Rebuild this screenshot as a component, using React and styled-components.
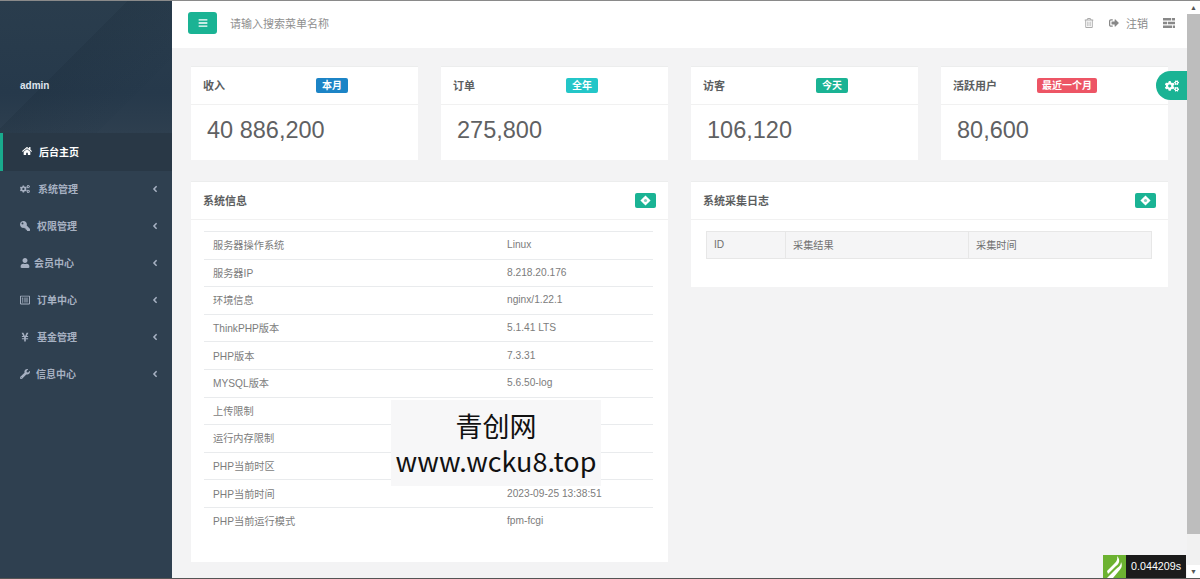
import React from 'react'
import styled, { createGlobalStyle } from 'styled-components'
import { FaHome, FaCogs, FaKey, FaUser, FaRegListAlt, FaYenSign, FaWrench, FaBars, FaRegTrashAlt, FaSignOutAlt, FaAngleLeft } from 'react-icons/fa'

const Global = createGlobalStyle`
  html, body { margin: 0; padding: 0; height: 100%; overflow: hidden; }
  body { font-family: "Liberation Sans", "Noto Sans CJK SC", sans-serif; color: #676a6c; }
`

const Frame = styled.div`
  position: relative;
  display: flex;
  height: 579px;
  box-sizing: border-box;
  border-top: 1px solid #8a8a8a;
  border-bottom: 1px solid #555;
  overflow: hidden;
  background: #f3f3f4;
`

const Sidebar = styled.aside`
  width: 172px;
  flex: none;
  background: #2f4050;
`

const Profile = styled.div`
  height: 132px;
  box-sizing: border-box;
  padding: 77px 0 0 20px;
  background:
    linear-gradient(135deg, transparent 42%, rgba(22, 38, 52, 0.18) 42%, rgba(30, 50, 68, 0.08) 75%, transparent 75%),
    linear-gradient(180deg, #2a3d4d 0%, #26394b 70%, #2e3f4f 100%);
  color: #dfe4ed;
  font-size: 10px;
  font-weight: 700;
  line-height: 16px;
`

const Menu = styled.nav`
  display: flex;
  flex-direction: column;
`

const MenuItem = styled.a`
  display: flex;
  align-items: center;
  height: ${p => (p.$active ? 38 : 37)}px;
  box-sizing: border-box;
  padding: 0 12px 2px ${p => (p.$active ? 19 : 20)}px;
  font-size: 10px;
  font-weight: 600;
  color: ${p => (p.$active ? '#fff' : '#a7b1c2')};
  background: ${p => (p.$active ? '#293846' : 'transparent')};
  border-left: ${p => (p.$active ? '3px solid #19aa8d' : '0')};
`

const MenuIcon = styled.span`
  display: flex;
  align-items: center;
  width: ${p => p.$w || 18}px;
  flex: none;
  font-size: 10px;
  svg { transform: ${p => (p.$flip ? 'scaleX(-1)' : 'none')}; }
`

const MenuText = styled.span`
  flex: 1;
`

const Main = styled.main`
  flex: 1;
  min-width: 0;
  display: flex;
  flex-direction: column;
`

const TopBar = styled.header`
  display: flex;
  align-items: center;
  height: 47px;
  flex: none;
  box-sizing: border-box;
  padding: 0 12px 3px 16px;
  background: #fff;
`

const MenuButton = styled.button`
  display: flex;
  align-items: center;
  justify-content: center;
  width: 29px;
  height: 22px;
  padding: 0;
  border: 0;
  border-radius: 3px;
  background: #1ab394;
  color: #fff;
  font-size: 10px;
`

const Search = styled.span`
  margin-left: 13px;
  flex: 1;
  font-size: 11px;
  color: #8f8f8f;
`

const BarAction = styled.span`
  display: flex;
  align-items: center;
  gap: 7px;
  margin-left: ${p => p.$gap || 0}px;
  font-size: 11px;
  color: #888;
  svg { font-size: 10px; color: ${p => p.$tone || '#888'}; }
`

const Content = styled.div`
  flex: 1;
  display: flex;
  flex-direction: column;
  gap: 21px;
  padding: 18px 19px 0;
`

const StatRow = styled.section`
  display: grid;
  grid-template-columns: repeat(4, 227px);
  column-gap: 23px;
`

const Card = styled.div`
  background: #fff;
  border-top: 1px solid #eceded;
`

const CardHead = styled.div`
  display: flex;
  align-items: center;
  height: 37px;
  box-sizing: content-box;
  padding: 0 12px;
  border-bottom: 1px solid #f1f1f1;
`

const CardTitle = styled.h5`
  margin: 0 0 1px;
  width: ${p => (p.$stat ? '113px' : 'auto')};
  flex: ${p => (p.$stat ? 'none' : 1)};
  font-size: 11px;
  font-weight: 600;
  color: #5c5e60;
`

const Label = styled.span`
  height: 15px;
  margin: 0 0 1px ${p => (p.$long ? -29 : 0)}px;
  padding: 0 ${p => (p.$long ? 5 : 6)}px;
  border-radius: 2px;
  background: ${p => p.$bg};
  color: #fff;
  font-size: 10px;
  font-weight: 700;
  line-height: 15px;
`

const StatValue = styled.div`
  height: 55px;
  padding-left: 16px;
  font-size: 23.5px;
  line-height: 51px;
  color: #5f6163;
`

const PanelRow = styled.section`
  display: grid;
  grid-template-columns: 477px 477px;
  column-gap: 23px;
  align-items: start;
`

const PanelBtn = styled.span`
  display: flex;
  align-items: center;
  justify-content: center;
  width: 21px;
  height: 15px;
  border-radius: 2px;
  background: #1ab394;
`

const PanelBody = styled.div`
  padding: ${p => p.$pad};
`

const InfoTable = styled.table`
  width: 100%;
  border-collapse: collapse;
  font-size: 10.2px;
  color: #7c7c7c;
  td {
    height: 27.6px;
    padding: 0 0 1px 9px;
    box-sizing: border-box;
    border-top: 1px solid #e9ebed;
  }
  td:first-child { width: 294px; }
`

const LogTable = styled.table`
  width: 100%;
  border-collapse: collapse;
  font-size: 10.2px;
  color: #707070;
  th {
    height: 27px;
    padding: 0 0 1px 7px;
    box-sizing: border-box;
    text-align: left;
    font-weight: 400;
    background: #f5f5f6;
    border: 1px solid #e7e7e7;
  }
  th:first-child { width: 79px; }
  th:nth-child(2) { width: 183px; }
`

const ScrollTrack = styled.div`
  width: 13px;
  flex: none;
  display: flex;
  flex-direction: column;
  background: #f1f1f1;
  color: #555;
  font-size: 7px;
  text-align: center;
`

const ScrollArrow = styled.span`
  height: 13px;
  line-height: 13px;
  background: #fff;
`

const ScrollThumb = styled.span`
  height: 520px;
  background: #bdbdbd;
`

const ScrollRest = styled.span`
  flex: 1;
`

const SkinTab = styled.div`
  position: absolute;
  right: 13px;
  top: 70px;
  display: flex;
  align-items: center;
  justify-content: center;
  width: 31px;
  height: 29px;
  border-radius: 15px 0 0 15px;
  background: #1ab394;
  color: #fff;
  font-size: 14px;
`

const Timer = styled.div`
  position: absolute;
  right: 14px;
  bottom: 0;
  display: flex;
  height: 23px;
  background: #1b1b1b;
  color: #fff;
  font-size: 10.7px;
  line-height: 23px;
`

const TimerLogo = styled.span`
  display: flex;
  align-items: center;
  justify-content: center;
  width: 23px;
  margin-right: 5px;
  background: #6cb231;
`

const TimerText = styled.span`
  padding-right: 5px;
`

const Watermark = styled.div`
  position: absolute;
  left: 391px;
  top: 399px;
  width: 210px;
  height: 86px;
  padding-top: 8px;
  box-sizing: border-box;
  background: rgba(247, 247, 248, 0.97);
  color: #111;
  font-family: "Noto Sans CJK SC", "Open Sans", sans-serif;
  font-size: 27px;
  line-height: 35px;
  text-align: center;
  white-space: nowrap;
`

const TasksIcon = () => (
  <svg width="12" height="10" viewBox="0 0 12 10" fill="currentColor">
    <path d="M0 0h8v2.6H0zM8.8 0H12v2.6H8.8zM0 3.7h4v2.6H0zM4.8 3.7H12v2.6H4.8zM0 7.4h9V10H0zM9.8 7.4H12V10H9.8z" />
  </svg>
)

const DiamondIcon = () => (
  <svg width="11" height="11" viewBox="0 0 11 11">
    <path d="M5.5 0.4 10.6 5.5 5.5 10.6 0.4 5.5Z" fill="#fff" />
    <circle cx="5.5" cy="5.5" r="1.6" fill="#7fcfbe" />
  </svg>
)

const menu = [
  { icon: <FaCogs />, w: 18, label: '系统管理' },
  { icon: <FaKey />, w: 17, label: '权限管理', flip: true },
  { icon: <FaUser />, w: 14, label: '会员中心' },
  { icon: <FaRegListAlt />, w: 17, label: '订单中心' },
  { icon: <FaYenSign />, w: 17, label: '基金管理' },
  { icon: <FaWrench />, w: 16, label: '信息中心' },
]

const stats = [
  { title: '收入', tag: '本月', bg: '#1c84c6', value: '40 886,200' },
  { title: '订单', tag: '全年', bg: '#23c6c8', value: '275,800' },
  { title: '访客', tag: '今天', bg: '#1ab394', value: '106,120' },
  { title: '活跃用户', tag: '最近一个月', bg: '#ed5565', value: '80,600', long: true },
]

// the three empty values are covered by the watermark in the reference
const sysInfo = [
  ['服务器操作系统', 'Linux'],
  ['服务器IP', '8.218.20.176'],
  ['环境信息', 'nginx/1.22.1'],
  ['ThinkPHP版本', '5.1.41 LTS'],
  ['PHP版本', '7.3.31'],
  ['MYSQL版本', '5.6.50-log'],
  ['上传限制', ''],
  ['运行内存限制', ''],
  ['PHP当前时区', ''],
  ['PHP当前时间', '2023-09-25 13:38:51'],
  ['PHP当前运行模式', 'fpm-fcgi'],
]

export default function App() {
  return (
    <>
      <Global />
      <Frame>
        <Sidebar>
          <Profile>admin</Profile>
          <Menu>
            <MenuItem $active>
              <MenuIcon $w={17}><FaHome /></MenuIcon>
              <MenuText>后台主页</MenuText>
            </MenuItem>
            {menu.map(m => (
              <MenuItem key={m.label}>
                <MenuIcon $w={m.w} $flip={m.flip}>{m.icon}</MenuIcon>
                <MenuText>{m.label}</MenuText>
                <FaAngleLeft size={10} />
              </MenuItem>
            ))}
          </Menu>
        </Sidebar>
        <Main>
          <TopBar>
            <MenuButton><FaBars /></MenuButton>
            <Search>请输入搜索菜单名称</Search>
            <BarAction $tone="#aaa"><FaRegTrashAlt /></BarAction>
            <BarAction $gap={15}><FaSignOutAlt />注销</BarAction>
            <BarAction $gap={15}><TasksIcon /></BarAction>
          </TopBar>
          <Content>
            <StatRow>
              {stats.map(s => (
                <Card key={s.title}>
                  <CardHead>
                    <CardTitle $stat>{s.title}</CardTitle>
                    <Label $bg={s.bg} $long={s.long}>{s.tag}</Label>
                  </CardHead>
                  <StatValue>{s.value}</StatValue>
                </Card>
              ))}
            </StatRow>
            <PanelRow>
              <Card>
                <CardHead>
                  <CardTitle>系统信息</CardTitle>
                  <PanelBtn><DiamondIcon /></PanelBtn>
                </CardHead>
                <PanelBody $pad="11px 15px 27px 13px">
                  <InfoTable>
                    <tbody>
                      {sysInfo.map(([k, v]) => (
                        <tr key={k}><td>{k}</td><td>{v}</td></tr>
                      ))}
                    </tbody>
                  </InfoTable>
                </PanelBody>
              </Card>
              <Card>
                <CardHead>
                  <CardTitle>系统采集日志</CardTitle>
                  <PanelBtn><DiamondIcon /></PanelBtn>
                </CardHead>
                <PanelBody $pad="11px 16px 28px 15px">
                  <LogTable>
                    <thead>
                      <tr>
                        <th>ID</th>
                        <th>采集结果</th>
                        <th>采集时间</th>
                      </tr>
                    </thead>
                  </LogTable>
                </PanelBody>
              </Card>
            </PanelRow>
          </Content>
        </Main>
        <ScrollTrack>
          <ScrollArrow>▲</ScrollArrow>
          <ScrollThumb />
          <ScrollRest />
          <ScrollArrow>▼</ScrollArrow>
        </ScrollTrack>
        <SkinTab><FaCogs /></SkinTab>
        <Timer>
          <TimerLogo>
            <svg width="18" height="23" viewBox="0 0 18 23">
              <path d="M1 23 L9 15 C12 12 15 11 15 7 C17 11 15 14 12 17 L7 23 Z M1 16 L8 9 C10 7 12 5 11 1 C15 5 13 9 10 11 L2 19 Z" fill="#fff" />
            </svg>
          </TimerLogo>
          <TimerText>0.044209s</TimerText>
        </Timer>
        <Watermark>青创网<br />www.wcku8.top</Watermark>
      </Frame>
    </>
  )
}
